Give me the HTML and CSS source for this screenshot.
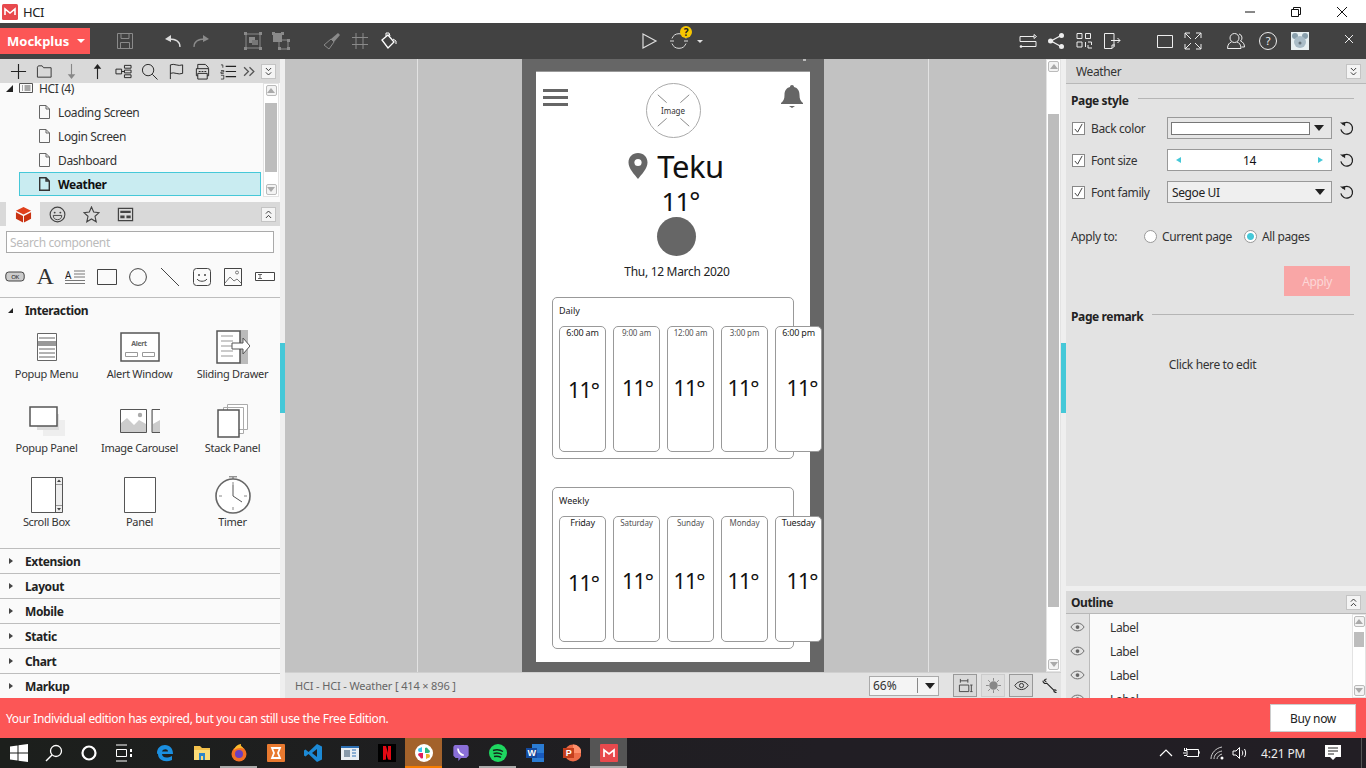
FILE: index.html
```html
<!DOCTYPE html>
<html lang="en">
<head>
<meta charset="utf-8">
<title>HCI - Mockplus</title>
<link rel="stylesheet" href="styles.css">
</head>
<body>
<div class="app">

  <!-- window title -->
  <div class="titlebar">
    <svg class="app-logo" viewBox="0 0 16 16"><rect width="16" height="16" rx="1.500" fill="#e8494d"/><path d="M3 11V5l5 4 5-4v6" fill="none" stroke="#fff" stroke-width="1.600"/></svg>
    <span class="app-name">HCI</span>
    <div class="win-btns">
      <svg viewBox="0 0 12 12"><path d="M1 6h10" stroke="#111" fill="none"/></svg>
      <svg viewBox="0 0 12 12"><path d="M1.500 3.500h7v7h-7zM3.500 3.500v-2h7v7h-2" stroke="#111" fill="none"/></svg>
      <svg viewBox="0 0 12 12"><path d="M1 1l10 10M11 1L1 11" stroke="#111" fill="none"/></svg>
    </div>
  </div>

  <!-- main toolbar -->
  <div class="toolbar">
    <div class="brand">Mockplus <i class="caret"></i></div>
    <div class="tgroup g-save dim">
      <svg viewBox="0 0 18 18"><path d="M1.500 1.500h15v15h-15zM5 1.500v5h8v-5M4.500 16.500v-6h9v6" fill="none" stroke="currentColor"/></svg>
    </div>
    <div class="tgroup g-undo">
      <svg viewBox="0 0 18 18"><path d="M16 15c0-5-4-8-11-8" fill="none" stroke="#ddd" stroke-width="1.300"/><path d="M1 7l6-4v7z" fill="#ddd"/></svg>
      <svg class="dim" viewBox="0 0 18 18"><path d="M2 15c0-5 4-8 11-8" fill="none" stroke="currentColor" stroke-width="1.300"/><path d="M17 7l-6-4v7z" fill="currentColor"/></svg>
    </div>
    <div class="tgroup g-arrange dim">
      <svg viewBox="0 0 18 18"><path d="M2 2h14v14H2z" fill="none" stroke="currentColor"/><path d="M5 5h6v6H5z" fill="currentColor"/><path d="M8 8h6v5H8z" fill="#777"/><path d="M0 0h3v3H0zM15 0h3v3h-3zM0 15h3v3H0zM15 15h3v3h-3z" fill="currentColor"/></svg>
      <svg viewBox="0 0 18 18"><path d="M1 1h9v9H1z" fill="currentColor"/><path d="M7 8h9v9H7z" fill="none" stroke="currentColor"/><path d="M0 0h3v3H0zM9 0h3v3H9zM15 7h3v3h-3zM6 15h3v3H6zM15 15h3v3h-3z" fill="currentColor"/></svg>
    </div>
    <div class="tgroup g-style">
      <svg class="dim" viewBox="0 0 18 18"><path d="M8 7l3 3-5 7-5-4z" fill="none" stroke="currentColor"/><path d="M8 7l7-6 2 2-6 7z" fill="currentColor"/></svg>
      <svg class="dim" viewBox="0 0 18 18"><path d="M5 1v16M12 1v16M1 5.500h16M1 12.500h16" fill="none" stroke="currentColor"/></svg>
      <svg viewBox="0 0 18 18"><path d="M3 8l6-5 6 7-6 6z" fill="none" stroke="#fff" stroke-width="1.300"/><path d="M7 4V1h3l1 3M14 7l3 2v3" fill="none" stroke="#fff"/></svg>
    </div>
    <div class="tgroup g-run">
      <svg viewBox="0 0 18 18"><path d="M1 2l13 7-13 7z" fill="none" stroke="#ddd" stroke-width="1.200"/></svg>
      <span class="sync">
        <svg viewBox="0 0 18 18"><path d="M2 6.500a7.500 7.500 0 0 1 14 0M16 11.500a7.500 7.500 0 0 1-14 0" fill="none" stroke="#ddd"/><path d="M0 9h4M14 9h4" stroke="#ddd"/></svg>
        <b class="qmark">?</b>
      </span>
      <i class="caret small"></i>
    </div>
    <div class="tgroup g-share">
      <svg viewBox="0 0 18 18"><path d="M1 9.500v-5h14v-2l2.500 2-2.500 2v-2M17 9.500v5H2.500M1 9.500h16" fill="none" stroke="#eee"/><circle cx="2" cy="14.500" r="1.300" fill="#eee"/></svg>
      <svg viewBox="0 0 18 18"><path d="M14 3.500L4 9l10 5.500" fill="none" stroke="#eee" stroke-width="1.300"/><circle cx="14.500" cy="3.500" r="2.500" fill="#eee"/><circle cx="3.500" cy="9" r="2.500" fill="#eee"/><circle cx="14.500" cy="14.500" r="2.500" fill="#eee"/></svg>
      <svg viewBox="0 0 18 18"><path d="M2 1.500h5v5H2zM10.500 1.500h5v5h-5zM2 10h5v5H2zM10.500 10v5M13 10h3.500v3M13 13v3h4" fill="none" stroke="#eee"/></svg>
      <svg viewBox="0 0 18 18"><path d="M11 15V1.500H1.500v15H9l2-2M9 16.500V13h3M8 8.500h9M14.500 6l2.500 2.500-2.500 2.500" fill="none" stroke="#eee"/></svg>
    </div>
    <div class="tgroup g-view">
      <svg viewBox="0 0 18 18"><path d="M1.500 3.500h15v12h-15z" fill="none" stroke="#eee"/></svg>
      <svg viewBox="0 0 18 18"><path d="M1 1l6 6M17 1l-6 6M1 17l6-6M17 17l-6-6M1 6V1h5M12 1h5v5M1 12v5h5M12 17h5v-5" fill="none" stroke="#eee"/></svg>
    </div>
    <div class="tgroup g-user">
      <svg viewBox="0 0 18 18"><circle cx="7.500" cy="6" r="4.500" fill="none" stroke="#eee"/><path d="M4.500 10c-2 .5-4 2.500-4 6.500H14c0-4-2-6-4-6.500M12 2a4 4 0 0 1 1.500 7c2.500 1 4 3 4 6h-3" fill="none" stroke="#eee"/></svg>
      <svg viewBox="0 0 18 18"><circle cx="9" cy="9" r="8.500" fill="none" stroke="#eee"/><text x="9" y="13" class="help">?</text></svg>
      <svg class="avatar" viewBox="0 0 18 18"><path d="M0 0h18v18H0z" fill="#e8f0f2"/><circle cx="4" cy="4" r="3" fill="#8aa0ad"/><circle cx="14" cy="4" r="3" fill="#8aa0ad"/><circle cx="9" cy="10" r="6" fill="#a9bcc7"/><circle cx="9" cy="11" r="1.500" fill="#66737b"/></svg>
    </div>
    <svg class="panel-x" viewBox="0 0 10 10"><path d="M1 1l8 8M9 1L1 9" stroke="#eee" fill="none"/></svg>
  </div>

  <div class="workspace">

    <!-- left side: pages + components -->
    <aside class="left">
      <div class="left-tools">
        <svg viewBox="0 0 18 18"><path d="M9 1v16M1 9h16" stroke="#222" fill="none" stroke-width="1.200"/></svg>
        <svg viewBox="0 0 18 18"><path d="M1.500 15V4.500l1-1.500h4l1.500 2h8v10z" stroke="#333" fill="none"/></svg>
        <svg viewBox="0 0 18 18"><path d="M9 1v14" stroke="#888" stroke-width="1.200"/><path d="M5 12h8l-4 5z" fill="#888"/></svg>
        <svg viewBox="0 0 18 18"><path d="M9 17V3" stroke="#222" stroke-width="1.200"/><path d="M5 6h8L9 1z" fill="#222"/></svg>
        <svg viewBox="0 0 18 18"><path d="M1 6.500h6v5H1zM10 2.500h7v3h-7zM10 7.500h7v3h-7zM10 12.500h7v3h-7zM7 9h3" stroke="#222" fill="none"/></svg>
        <svg viewBox="0 0 18 18"><circle cx="7.500" cy="7.500" r="6" stroke="#222" fill="none"/><path d="M12 12l5.500 5.500" stroke="#222"/></svg>
        <svg viewBox="0 0 18 18"><path d="M2.500 17V2c4-2 8 2 13 0v9c-5 2-9-2-13 0" stroke="#222" fill="none"/></svg>
        <svg viewBox="0 0 18 18"><path d="M4 6V1.500h8l3 3V6M4 13.500H2.500V6h13v7.500H14M4 11h10v6H4z" stroke="#222" fill="none"/><path d="M5 9h2M8 9h2M11 9h2" stroke="#222"/></svg>
        <svg viewBox="0 0 18 18"><path d="M6 3.500h11M6 9h11M6 14.500h11" stroke="#222" fill="none" stroke-width="1.300"/><path d="M1 2h2v3M1 8h3v1.500H1V11h3M1 13h3v4H1" stroke="#222" fill="none" stroke-width=".8"/></svg>
        <svg class="chev-more" viewBox="0 0 12 12"><path d="M1 2l4 4-4 4M6 2l4 4-4 4" stroke="#555" fill="none" stroke-width="1.200"/></svg>
        <span class="mini-btn"><svg viewBox="0 0 8 10"><path d="M1 1l3 3 3-3M1 6l3 3 3-3" stroke="#222" fill="none"/></svg></span>
      </div>

      <div class="tree">
        <div class="tree-list">
          <div class="tree-root"><i class="tri-down"></i>
            <svg class="list-ico" viewBox="0 0 14 10"><path d="M.5.500h13v9H.500zM3 3h1M3 5h1M3 7h1M5.500 3h6M5.500 5h6M5.500 7h6" stroke="#555" fill="none"/></svg>
            HCI (4)</div>
          <div class="tree-item"><svg class="page-ico" viewBox="0 0 11 14"><path d="M.5.500h6.500l3.500 3.500v9.500H.500zM7 .500V4h3.500" stroke="#666" fill="none"/></svg>Loading Screen</div>
          <div class="tree-item"><svg class="page-ico" viewBox="0 0 11 14"><path d="M.5.500h6.500l3.500 3.500v9.500H.500zM7 .500V4h3.500" stroke="#666" fill="none"/></svg>Login Screen</div>
          <div class="tree-item"><svg class="page-ico" viewBox="0 0 11 14"><path d="M.5.500h6.500l3.500 3.500v9.500H.500zM7 .500V4h3.500" stroke="#666" fill="none"/></svg>Dashboard</div>
          <div class="tree-item active"><svg class="page-ico" viewBox="0 0 11 14"><path d="M.7.700h6.300l3.300 3.300v9.300H.700zM7 .700V4h3.300" stroke="#333" stroke-width="1.400" fill="none"/></svg>Weather</div>
        </div>
        <div class="vscroll tree-scroll">
          <span class="sb-btn"><i class="tri-up"></i></span>
          <div class="sb-track"><div class="sb-thumb"></div></div>
          <span class="sb-btn"><i class="tri-dn"></i></span>
        </div>
      </div>

      <div class="tabs">
        <span class="tab on"><svg viewBox="0 0 18 18"><path d="M9 1l8 4-8 4-8-4z" fill="#e0401c"/><path d="M1 6.500l7.500 4v7L1 13.500zM17 6.500l-7.500 4v7l7.500-4z" fill="#c93312"/></svg></span>
        <span class="tab"><svg viewBox="0 0 18 18"><circle cx="9" cy="9" r="7.800" fill="none" stroke="#444" stroke-width="1.200"/><circle cx="6" cy="7" r="1" fill="#444"/><circle cx="12" cy="7" r="1" fill="#444"/><path d="M4.500 10h9c0 3-2 4.500-4.500 4.500S4.500 13 4.500 10z" fill="none" stroke="#444"/></svg></span>
        <span class="tab"><svg viewBox="0 0 18 18"><path d="M9 1l2.300 5.400 5.700.6-4.300 3.900 1.300 5.800-5-3-5 3 1.300-5.800L1 7l5.700-.6z" fill="none" stroke="#444" stroke-width="1.200"/></svg></span>
        <span class="tab"><svg viewBox="0 0 18 18"><path d="M1.500 2.500h15v13h-15z" fill="none" stroke="#444" stroke-width="1.300"/><path d="M3.500 5h11v2.500h-11zM3.500 10h4.500v3H3.500zM10 10h4.500v3H10z" fill="#444"/></svg></span>
        <span class="mini-btn"><svg viewBox="0 0 8 10"><path d="M1 4l3-3 3 3M1 9l3-3 3 3" stroke="#222" fill="none"/></svg></span>
      </div>

      <div class="search-box">Search component</div>

      <div class="basic-row">
        <svg viewBox="0 0 20 12"><rect x=".8" y="1" width="18.400" height="9" rx="3" fill="#ccc" stroke="#444"/><text x="10" y="8.300" class="ok">OK</text></svg>
        <span class="big-a">A</span>
        <svg viewBox="0 0 20 16"><text x="0" y="9.500" class="para-a">A</text><path d="M9 2h11M9 5h11M9 8h11M0 11.500h20M0 14.500h20" stroke="#777"/></svg>
        <svg viewBox="0 0 20 16"><path d="M.5.500h19v15H.5z" fill="none" stroke="#444"/></svg>
        <svg viewBox="0 0 18 18"><circle cx="9" cy="9" r="8.400" fill="none" stroke="#444"/></svg>
        <svg viewBox="0 0 18 18"><path d="M0 0l18 18" stroke="#444"/></svg>
        <svg viewBox="0 0 18 18"><rect x=".5" y=".5" width="17" height="17" rx="3" fill="none" stroke="#444"/><circle cx="6" cy="7" r="1" fill="#444"/><circle cx="12" cy="7" r="1" fill="#444"/><path d="M4 11c2 3 8 3 10 0" fill="none" stroke="#444"/></svg>
        <svg viewBox="0 0 18 18"><path d="M.5.500h17v17H.5z" fill="none" stroke="#444"/><circle cx="13" cy="4.500" r="1.500" fill="none" stroke="#777"/><path d="M1 15l5-6 4 4 3-2 4 4" fill="none" stroke="#777"/></svg>
        <svg viewBox="0 0 20 10"><path d="M.5.500h19v8H.5z" fill="#fff" stroke="#444"/><path d="M3 2.500h4M5 2.500v4M3 6.500h4" stroke="#444" stroke-width=".8"/></svg>
      </div>

      <div class="section-head open"><i class="tri-down"></i>Interaction</div>
      <div class="comp-grid">
        <div class="comp">
          <div class="comp-ico"><svg width="20" height="28" viewBox="0 0 20 28"><path d="M.5.500h19v27H.500z" fill="#fff" stroke="#666"/><path d="M2 5h16M2 16h16M2 20h16M2 24h16" stroke="#666"/><path d="M1 8h18v5H1z" fill="#999"/></svg></div>
          <span>Popup Menu</span>
        </div>
        <div class="comp">
          <div class="comp-ico"><svg width="40" height="30" viewBox="0 0 40 30"><path d="M1 1h38v28H1z" fill="#fff" stroke="#555" stroke-width="1.500"/><text x="19" y="14" class="alert">Alert</text><path d="M5.500 20.500h12v4h-12zM22.500 20.500h12v4h-12z" fill="none" stroke="#999"/></svg></div>
          <span>Alert Window</span>
        </div>
        <div class="comp">
          <div class="comp-ico"><svg width="34" height="34" viewBox="0 0 34 34"><path d="M24 0h8v34h-8z" fill="#bbb"/><path d="M1 1h23v32H1z" fill="#fff" stroke="#555" stroke-width="1.500"/><path d="M5 6h12M5 11h12M5 16h12M5 21h12M5 26h12" stroke="#bbb" stroke-width="1.500"/><path d="M16 13h11v-5l7 8-7 8v-5H16z" fill="#fff" stroke="#555"/></svg></div>
          <span>Sliding Drawer</span>
        </div>
        <div class="comp">
          <div class="comp-ico"><svg width="36" height="30" viewBox="0 0 36 30"><path d="M14 14h22v16H14z" fill="#eee"/><path d="M8 8h22v16H8z" fill="#ddd"/><path d="M1 1h27v19H1z" fill="#fff" stroke="#555" stroke-width="1.500"/></svg></div>
          <span>Popup Panel</span>
        </div>
        <div class="comp">
          <div class="comp-ico"><svg width="40" height="24" viewBox="0 0 40 24"><path d="M.5.500h26v23H.500z" fill="#ccc" stroke="#555"/><path d="M1 1h25v14l-7-4-5 5-7-7-6 5z" fill="#fff"/><circle cx="20" cy="6" r="2.200" fill="#aaa"/><path d="M40 .5h-8v23h8" fill="#ccc" stroke="#555"/><path d="M33 1h7v10l-7 4z" fill="#fff"/></svg></div>
          <span>Image Carousel</span>
        </div>
        <div class="comp">
          <div class="comp-ico"><svg width="32" height="34" viewBox="0 0 32 34"><path d="M10.500.500h20v25h-20zM6.500 3.500h20v26h-20z" fill="#fff" stroke="#aaa"/><path d="M1 6h21v27H1z" fill="#fff" stroke="#555" stroke-width="1.500"/></svg></div>
          <span>Stack Panel</span>
        </div>
        <div class="comp">
          <div class="comp-ico"><svg width="32" height="36" viewBox="0 0 32 36"><path d="M.5.500h31v35H.500z" fill="#fff" stroke="#555"/><path d="M24.500.500v35" stroke="#555"/><path d="M25 1h6v34h-6z" fill="#eee"/><path d="M25 7.500h6M25 28.500h6" stroke="#999"/><path d="M28 2.500l2 2.500h-4zM28 33.500l2-2.500h-4z" fill="#444"/></svg></div>
          <span>Scroll Box</span>
        </div>
        <div class="comp">
          <div class="comp-ico"><svg width="32" height="36" viewBox="0 0 32 36"><path d="M.5.500h31v35H.500z" fill="#fff" stroke="#555"/></svg></div>
          <span>Panel</span>
        </div>
        <div class="comp">
          <div class="comp-ico"><svg width="36" height="38" viewBox="0 0 36 38"><circle cx="18" cy="20" r="17" fill="#fff" stroke="#666" stroke-width="1.600"/><path d="M18 3V1M14 .8h8" stroke="#666"/><path d="M18 9v11l9 6" fill="none" stroke="#555"/><path d="M18 6v3M18 31v3M4 20h3M29 20h3" stroke="#888"/></svg></div>
          <span>Timer</span>
        </div>
      </div>

      <div class="accordion">
        <div class="section-head"><i class="tri-right"></i>Extension</div>
        <div class="section-head"><i class="tri-right"></i>Layout</div>
        <div class="section-head"><i class="tri-right"></i>Mobile</div>
        <div class="section-head"><i class="tri-right"></i>Static</div>
        <div class="section-head"><i class="tri-right"></i>Chart</div>
        <div class="section-head"><i class="tri-right"></i>Markup</div>
      </div>
      <span class="handle"></span>
    </aside>

    <!-- canvas -->
    <main class="center">
      <div class="canvas-row">
        <div class="canvas">
          <i class="guide guide-l"></i>
          <i class="guide guide-r"></i>
          <div class="device">
            <i class="device-mark"></i>
            <div class="screen">
              <div class="screen-top">
                <div class="burger"><i></i><i></i><i></i></div>
                <div class="img-ph">
                  <svg viewBox="0 0 54 54"><path d="M11 11l9 8M43 11l-9 8M11 43l9-8M43 43l-9-8" stroke="#888"/></svg>
                  <span>Image</span>
                </div>
                <svg class="bell" viewBox="0 0 22 24"><path d="M11 0c1.200 0 2 .8 2 2 4 1 5.500 4 5.500 8 0 4 1 6 3.500 8v1H0v-1c2.500-2 3.500-4 3.500-8 0-4 1.500-7 5.500-8 0-1.200.8-2 2-2z" fill="#666"/><path d="M8 21h6l-3 2z" fill="#666"/></svg>
              </div>
              <div class="city">
                <svg class="pin" viewBox="0 0 20 26"><path d="M10 0c5.500 0 9.500 4 9.500 9.500 0 6-6 12-9.500 16.500C6.500 21.500.5 15.500.5 9.500.5 4 4.500 0 10 0z" fill="#666"/><circle cx="10" cy="9.500" r="3.600" fill="#fff"/></svg>
                <span>Teku</span>
              </div>
              <div class="now-temp">11°</div>
              <div class="sun"></div>
              <div class="date">Thu, 12 March 2020</div>

              <section class="forecast daily">
                <div class="fc-title">Daily</div>
                <div class="fc-cards">
                  <div class="fc-card strong first"><span>6:00 am</span><b>11°</b></div>
                  <div class="fc-card"><span>9:00 am</span><b>11°</b></div>
                  <div class="fc-card nudge"><span>12:00 am</span><b>11°</b></div>
                  <div class="fc-card nudge"><span>3:00 pm</span><b>11°</b></div>
                  <div class="fc-card strong last"><span>6:00 pm</span><b>11°</b></div>
                </div>
              </section>

              <section class="forecast weekly">
                <div class="fc-title">Weekly</div>
                <div class="fc-cards">
                  <div class="fc-card strong first"><span>Friday</span><b>11°</b></div>
                  <div class="fc-card"><span>Saturday</span><b>11°</b></div>
                  <div class="fc-card nudge"><span>Sunday</span><b>11°</b></div>
                  <div class="fc-card nudge"><span>Monday</span><b>11°</b></div>
                  <div class="fc-card strong last"><span>Tuesday</span><b>11°</b></div>
                </div>
              </section>
            </div>
          </div>
        </div>
        <div class="vscroll canvas-scroll">
          <span class="sb-btn"><i class="tri-up"></i></span>
          <div class="sb-track"><div class="sb-thumb"></div></div>
          <span class="sb-btn"><i class="tri-dn"></i></span>
        </div>
      </div>
      <div class="statusbar">
        <span class="crumb">HCI - HCI - Weather [ 414 × 896 ]</span>
        <div class="zoom-box"><span>66%</span><i class="tri-dn big"></i></div>
        <span class="st-btn on"><svg viewBox="0 0 16 16"><path d="M2.500 1v4M10.500 1v4M2.500 3h8M1.500 7.500h10v7h-10zM13 7.500h2.500M14.200 7.500v7M13 14.500h2.500" stroke="#444" fill="none"/></svg></span>
        <span class="st-btn soft"><svg viewBox="0 0 16 16"><circle cx="8" cy="8" r="4.500" fill="#888"/><path d="M8 0v3M8 13v3M0 8h3M13 8h3M2.300 2.300l2 2M11.700 11.700l2 2M13.700 2.300l-2 2M4.300 11.700l-2 2" stroke="#888"/></svg></span>
        <span class="st-btn on"><svg viewBox="0 0 18 12"><path d="M1 6c4-6.500 12-6.500 16 0-4 6.500-12 6.500-16 0z" fill="none" stroke="#333" stroke-width="1.200"/><circle cx="9" cy="6" r="2.500" fill="none" stroke="#333" stroke-width="1.200"/></svg></span>
        <svg class="wrench" viewBox="0 0 16 16"><path d="M1 3c0 2 2 3.500 4 2.500l7.500 7.500M5 1C3.500 1 3 1.500 2.500 2.500L4.500 4M12.500 13c0 1.500 1 2.500 3 2.500M12.500 13c1-.5 2-.3 3 .5" stroke="#222" fill="none" stroke-width="1.200"/></svg>
      </div>
      <span class="handle handle-r"></span>
    </main>

    <!-- right side: properties -->
    <aside class="right">
      <div class="right-head"><span>Weather</span><span class="mini-btn"><svg viewBox="0 0 8 10"><path d="M1 1l3 3 3-3M1 6l3 3 3-3" stroke="#222" fill="none"/></svg></span></div>
      <div class="props">
        <div class="prop-title"><b>Page style</b><i></i></div>
        <div class="prop-row">
          <span class="check"><svg viewBox="0 0 12 12"><path d="M2 6.500l3 3.500 5-9" stroke="#333" fill="none"/></svg></span>
          <label>Back color</label>
          <div class="ctl color-ctl"><span class="swatch"></span><i class="tri-dn big"></i></div>
          <svg class="reset" viewBox="0 0 16 16"><path d="M3.500 3.500A6.300 6.300 0 1 1 2 9" stroke="#222" fill="none" stroke-width="1.300"/><path d="M1 1.500h5.500v4z" fill="#222"/></svg>
        </div>
        <div class="prop-row">
          <span class="check"><svg viewBox="0 0 12 12"><path d="M2 6.500l3 3.500 5-9" stroke="#333" fill="none"/></svg></span>
          <label>Font size</label>
          <div class="ctl size-ctl"><i class="tri-l"></i><span>14</span><i class="tri-r"></i></div>
          <svg class="reset" viewBox="0 0 16 16"><path d="M3.500 3.500A6.300 6.300 0 1 1 2 9" stroke="#222" fill="none" stroke-width="1.300"/><path d="M1 1.500h5.500v4z" fill="#222"/></svg>
        </div>
        <div class="prop-row">
          <span class="check"><svg viewBox="0 0 12 12"><path d="M2 6.500l3 3.500 5-9" stroke="#333" fill="none"/></svg></span>
          <label>Font family</label>
          <div class="ctl family-ctl"><span>Segoe UI</span><i class="tri-dn big"></i></div>
          <svg class="reset" viewBox="0 0 16 16"><path d="M3.500 3.500A6.300 6.300 0 1 1 2 9" stroke="#222" fill="none" stroke-width="1.300"/><path d="M1 1.500h5.500v4z" fill="#222"/></svg>
        </div>
        <div class="apply-to">
          <span class="apply-label">Apply to:</span>
          <i class="radio"></i><span class="r1">Current page</span>
          <i class="radio sel"></i><span>All pages</span>
        </div>
        <div class="apply-wrap"><button class="apply-btn">Apply</button></div>
        <div class="prop-title remark"><b>Page remark</b><i></i></div>
        <div class="remark-text">Click here to edit</div>
      </div>
      <div class="outline">
        <div class="outline-head"><b>Outline</b><span class="mini-btn"><svg viewBox="0 0 8 10"><path d="M1 4l3-3 3 3M1 9l3-3 3 3" stroke="#222" fill="none"/></svg></span></div>
        <div class="outline-body">
          <div class="eyes">
            <svg viewBox="0 0 16 10"><path d="M1 5c3-5.500 11-5.500 14 0-3 5.500-11 5.500-14 0z" fill="none" stroke="#666"/><circle cx="8" cy="5" r="2" fill="#666"/></svg>
            <svg viewBox="0 0 16 10"><path d="M1 5c3-5.500 11-5.500 14 0-3 5.500-11 5.500-14 0z" fill="none" stroke="#666"/><circle cx="8" cy="5" r="2" fill="#666"/></svg>
            <svg viewBox="0 0 16 10"><path d="M1 5c3-5.500 11-5.500 14 0-3 5.500-11 5.500-14 0z" fill="none" stroke="#666"/><circle cx="8" cy="5" r="2" fill="#666"/></svg>
            <svg viewBox="0 0 16 10"><path d="M1 5c3-5.500 11-5.500 14 0-3 5.500-11 5.500-14 0z" fill="none" stroke="#666"/><circle cx="8" cy="5" r="2" fill="#666"/></svg>
          </div>
          <div class="out-list">
            <div>Label</div><div>Label</div><div>Label</div><div>Label</div>
          </div>
          <div class="vscroll out-scroll">
            <span class="sb-btn"><i class="tri-up"></i></span>
            <div class="sb-track"><div class="sb-thumb"></div></div>
            <span class="sb-btn"><i class="tri-dn"></i></span>
          </div>
        </div>
      </div>
    </aside>
  </div>

  <!-- upgrade notice -->
  <div class="notice">
    <span>Your Individual edition has expired, but you can still use the Free Edition.</span>
    <button class="buy">Buy now</button>
  </div>

  <!-- windows taskbar -->
  <div class="taskbar">
    <span class="tb-app sys"><svg viewBox="0 0 18 18"><path d="M0 2.500L7.500 1.400v7.100H0zM8.500 1.300L18 0v8.500H8.500zM0 9.500h7.500v7.100L0 15.500zM8.500 9.500H18V18l-9.500-1.300z" fill="#fff"/></svg></span>
    <span class="tb-app sys"><svg viewBox="0 0 18 18"><circle cx="11" cy="7" r="5.500" fill="none" stroke="#fff" stroke-width="1.300"/><path d="M7 11l-6 6" stroke="#fff" stroke-width="1.500"/></svg></span>
    <span class="tb-app sys"><svg viewBox="0 0 18 18"><circle cx="9" cy="9" r="6.500" fill="none" stroke="#fff" stroke-width="2.200"/></svg></span>
    <span class="tb-app sys"><svg viewBox="0 0 18 18"><path d="M1 1h11M1 17h11M1.500 5.500h10v7h-10z" fill="none" stroke="#fff"/><path d="M15 5h2v3h-2zM15 10h2v3h-2z" fill="#fff"/></svg></span>
    <span class="tb-app"><svg viewBox="0 0 18 18"><path d="M1 9C1 4 4.500 1 9 1c5 0 8 3.500 8 9H6c0 3 4 5 10 2v4c-7 3-14 0-14-6 0 0-1 0-1-1zM6 7.500h6C12 4.500 7 4.500 6 7.500z" fill="#1b8fe0"/></svg></span>
    <span class="tb-app"><svg viewBox="0 0 18 18"><path d="M1 2h6l2 2h8v12H1z" fill="#f3c14b"/><path d="M1 6h16v10H1z" fill="#fbdc78"/><path d="M6 9h6v7H6z" fill="#2f86c9"/><path d="M8 12h2v4H8z" fill="#fbdc78"/></svg></span>
    <span class="tb-app open"><svg viewBox="0 0 18 18"><circle cx="9" cy="10" r="7.500" fill="#f36f24"/><circle cx="9" cy="10" r="4" fill="#6a3fc0"/><path d="M4 6c1-4 5-6 7-6-1 2 2 3 3 5-3-2-7-1-10 1z" fill="#fcb92c"/></svg></span>
    <span class="tb-app"><svg viewBox="0 0 18 18"><rect width="18" height="18" rx="1" fill="#e8792f"/><path d="M5 4h8l-2 5 2 5H5l2-5z" fill="none" stroke="#fff" stroke-width="1.800"/></svg></span>
    <span class="tb-app"><svg viewBox="0 0 18 18"><path d="M13 0l5 2.500v13L13 18 4.500 10 1.500 12.500 0 11.500V6.500l1.500-1 3 2.500zM13 5L8 9l5 4z" fill="#1c8ad6"/></svg></span>
    <span class="tb-app"><svg viewBox="0 0 18 18"><path d="M0 2h18v14H0z" fill="#e9eef3"/><path d="M0 2h18v2H0z" fill="#2d6fb3"/><path d="M3 6h6v7H3z" fill="#8799aa"/><path d="M11 6h4M11 9h4M11 12h4" stroke="#2d6fb3"/></svg></span>
    <span class="tb-app"><svg viewBox="0 0 18 18"><path d="M0 0h18v18H0z" fill="#000"/><path d="M5 2h3l2 7V2h3v14l-3-.5L8 9v6.500L5 16z" fill="#e50914"/></svg></span>
    <span class="tb-app active"><svg viewBox="0 0 18 18"><circle cx="9" cy="9" r="9" fill="#fff"/><path d="M7 3v5H5a2 2 0 0 1 0-4z" fill="#36c5f0"/><path d="M15 7a2 2 0 0 1-2 2h-3V4a2 2 0 0 1 3 1z" fill="#2eb67d"/><path d="M11 15v-5h2a2 2 0 0 1 0 4z" fill="#ecb22e"/><path d="M3 11a2 2 0 0 1 2-2h3v5a2 2 0 0 1-3-1z" fill="#e01e5a"/></svg></span>
    <span class="tb-app"><svg viewBox="0 0 18 20"><path d="M2 1h14l1.500 2v10L15 15.500H9L6 19v-3.500H3L.5 13V3z" fill="#8a6fd8"/><path d="M5 5c1-1 2 1 2 2 .5 2 2 3.500 4 4 1 0 2 1 1 2-3 1-8-4-7-8z" fill="#fff"/></svg></span>
    <span class="tb-app open"><svg viewBox="0 0 18 18"><circle cx="9" cy="9" r="9" fill="#1ed760"/><path d="M4 6.500c3-1 7-.8 10 1M4.500 9.500c3-.8 6-.5 8.500 1M5 12.500c2.500-.6 5-.3 7 .8" fill="none" stroke="#14261a" stroke-width="1.400"/></svg></span>
    <span class="tb-app"><svg viewBox="0 0 18 18"><path d="M6 0h12v18H6z" fill="#2b7cd3"/><path d="M6 9h12v5H6z" fill="#185abd"/><path d="M0 4h11v10H0z" fill="#144a9e"/><text x="5.500" y="12" class="word">W</text></svg></span>
    <span class="tb-app"><svg viewBox="0 0 18 18"><circle cx="10" cy="9" r="8.500" fill="#ed6c47"/><path d="M10 .5A8.500 8.500 0 0 1 18.500 9H10z" fill="#ff8f6b"/><path d="M0 4h11v10H0z" fill="#c43e1c"/><text x="5.500" y="12" class="word">P</text></svg></span>
    <span class="tb-app open cur"><svg viewBox="0 0 18 18"><rect width="18" height="18" rx="1" fill="#e8494d"/><path d="M4 13V6l5 4 5-4v7" fill="none" stroke="#fff" stroke-width="1.700"/></svg></span>

    <div class="tray">
      <svg class="t-up" viewBox="0 0 14 8"><path d="M1 7l6-6 6 6" fill="none" stroke="#fff" stroke-width="1.200"/></svg>
      <svg class="t-bat" viewBox="0 0 17 12"><path d="M4 2.500h11.500v7H4M15.500 5h1.500v2M0 6h3M1 3.500h3v5H1M1.500 1v2.500M3.500 1v2.500" fill="none" stroke="#fff"/></svg>
      <svg class="t-wifi" viewBox="0 0 15 14"><path d="M1 13C1 7 6 2 12 1M4 13c0-4 3-7 8-8M7 13c0-2 2-4 5-5" fill="none" stroke="#ccc"/><circle cx="12" cy="12" r="1.500" fill="#fff"/></svg>
      <svg class="t-vol" viewBox="0 0 16 14"><path d="M1 5h3l3.500-3.500v11L4 9H1zM10 4.500c1 1.500 1 3.500 0 5M12.500 3c1.500 2.500 1.500 5.500 0 8" fill="none" stroke="#fff"/></svg>
      <span class="clock">4:21 PM</span>
      <svg class="t-note" viewBox="0 0 16 16"><path d="M0 0h16v12h-5l-3 3-3-3H0z" fill="#fff"/><path d="M3 3h10M3 6h10M3 9h6" stroke="#222"/></svg>
      <i class="show-desk"></i>
    </div>
  </div>
</div>
</body>
</html>
```

FILE: styles.css
```css
* { box-sizing: border-box; }
html, body { margin: 0; padding: 0; height: 100%; }
body {
  font-family: "Noto Sans", "Open Sans", sans-serif;
  font-size: 12px;
  letter-spacing: -0.38px;
  color: #222;
  overflow: hidden;
}
svg { display: block; flex: none; }
i { display: block; flex: none; }
button { letter-spacing: inherit; }

.app { width: 1366px; height: 768px; display: flex; flex-direction: column; overflow: hidden; }

/* title bar */
.titlebar { height: 23px; background: #fff; display: flex; align-items: center; padding-left: 2px; }
.app-logo { width: 16px; height: 16px; }
.app-name { margin-left: 5px; font-size: 13px; color: #222; }
.win-btns { margin-left: auto; display: flex; }
.win-btns svg { width: 12px; height: 12px; margin-right: 34px; }
.win-btns svg:last-child { margin-right: 18px; }

/* toolbar */
.toolbar { height: 36px; background: #424242; display: flex; align-items: center; color: #8a8a8a; }
.brand {
  width: 90px; height: 26px; background: #fc5656; color: #fff;
  font-weight: 700; font-size: 13px; line-height: 26px; padding-left: 7px;
  display: flex; align-items: center; gap: 8px; letter-spacing: 0;
}
.caret { width: 0; height: 0; border: 4px solid transparent; border-top: 4px solid #fff; border-bottom: 0; }
.caret.small { border-width: 3px 3px 0; margin-left: -1px; border-top-color: #ddd; }
.tgroup { display: flex; align-items: center; gap: 10px; }
.tgroup svg { width: 18px; height: 18px; }
.dim { color: #8a8a8a; }
.g-save { margin-left: 26px; }
.g-undo { margin-left: 30px; }
.g-arrange { margin-left: 34px; }
.g-style { margin-left: 33px; }
.g-run { margin-left: 245px; }
.g-share { margin-left: 316px; }
.g-view { margin-left: 35px; }
.g-user { margin-left: 25px; gap: 14px; }
.sync { position: relative; display: block; }
.qmark {
  position: absolute; left: 10px; top: -6px; width: 12px; height: 12px; border-radius: 50%;
  background: #f7c600; color: #222; font-size: 10px; line-height: 12px; text-align: center;
}
.help { font: 11px "Noto Sans", sans-serif; fill: #eee; text-anchor: middle; }
.panel-x { width: 10px; height: 10px; margin-left: 35px; margin-top: -4px; }

/* three columns */
.workspace { height: 639px; display: flex; }

.left { width: 285px; background: #fafafa; border-right: 5px solid #efefef; position: relative; flex: none; }
.left-tools { height: 24px; background: #d9d9d9; display: flex; align-items: center; gap: 9.300px; padding-left: 10px; }
.left-tools svg { width: 17px; height: 17px; }
.left-tools .chev-more { width: 13px; height: 13px; margin-left: -4px; }
.mini-btn {
  width: 15px; height: 15px; background: #f4f4f4; border: 1px solid #c4c4c4;
  display: flex; align-items: center; justify-content: center;
}
.mini-btn svg { width: 7px !important; height: 9px !important; }
.left-tools .mini-btn { margin-left: -4px; }

.tree { height: 114px; display: flex; overflow: hidden; }
.tree-list { width: 262px; }
.tree-root { height: 10px; display: flex; align-items: center; padding-left: 6px; margin-bottom: 7px; color: #333; gap: 6px; }
.tree-root .list-ico { width: 14px; height: 10px; }
.tree-item { height: 24px; display: flex; align-items: center; padding-left: 39px; gap: 8px; color: #333; }
.page-ico { width: 11px; height: 14px; }
.tree-item.active {
  margin-left: 19px; padding-left: 19px; width: 242px; background: #c9ecf1; border: 1px solid #45c8d8;
  font-weight: 700; color: #111;
}
.tri-down { width: 0; height: 0; border-left: 7px solid transparent; border-bottom: 7px solid #222; }
.tri-right { width: 0; height: 0; border-top: 3px solid transparent; border-bottom: 3px solid transparent; border-left: 4px solid #444; }
.tri-up { width: 0; height: 0; border: 4px solid transparent; border-bottom: 5px solid #aaa; border-top: 0; }
.tri-dn { width: 0; height: 0; border: 4px solid transparent; border-top: 5px solid #aaa; border-bottom: 0; }
.tri-dn.big { border-width: 6px 5px 0; border-top-color: #222; }
.tri-l { width: 0; height: 0; border-top: 3px solid transparent; border-bottom: 3px solid transparent; border-right: 5px solid #45c8d8; }
.tri-r { width: 0; height: 0; border-top: 3px solid transparent; border-bottom: 3px solid transparent; border-left: 5px solid #45c8d8; }

.vscroll { display: flex; flex-direction: column; background: #fff; border: 1px solid #e3e3e3; align-items: center; }
.sb-btn {
  width: 11px; height: 11px; background: #f3f3f3; border: 1px solid #bbb; border-radius: 2px;
  display: flex; align-items: center; justify-content: center; flex: none; margin: 1px 0;
}
.sb-track { flex: 1; width: 100%; padding: 0 1px; }
.sb-thumb { background: #bdbdbd; }
.tree-scroll { width: 16px; margin-left: 1px; }
.tree-scroll .sb-thumb { height: 69px; margin-top: 6px; }

.tabs { margin-top: 5px; height: 24px; background: #d9d9d9; display: flex; align-items: center; padding-left: 6px; }
.tab { width: 34px; height: 24px; display: flex; align-items: center; justify-content: center; }
.tab svg { width: 17px; height: 17px; }
.tab.on { background: #fafafa; }
.tabs .mini-btn { margin-left: auto; margin-right: 4px; }

.search-box {
  margin: 5px 6px 0; width: 268px; height: 22px; border: 1px solid #aaa; background: #fff;
  color: #bbb; line-height: 21px; padding-left: 3px;
}
.basic-row { height: 45px; border-bottom: 1px solid #bdbdbd; display: flex; align-items: center; gap: 11.600px; padding: 3px 6px 0 5px; }
.basic-row svg { width: 20px; height: 18px; }
.big-a { font: 24px "Liberation Serif", serif; color: #333; width: 20px; text-align: center; }
.ok { font: 6px "Noto Sans", sans-serif; fill: #222; text-anchor: middle; }
.para-a { font: 10px "Noto Sans", sans-serif; fill: #222; }

.section-head {
  height: 25px; display: flex; align-items: center; font-weight: 700; color: #222;
  padding-left: 9px; gap: 12px;
}
.section-head.open { height: 24px; padding-left: 8px; gap: 9px; }
.section-head.open .tri-down { border-left-width: 5px; border-bottom-width: 5px; margin-right: 3px; }
.comp-grid { display: grid; grid-template-columns: repeat(3, 93px); grid-auto-rows: 74px; height: 226px; padding-top: 5px; }
.comp { display: flex; flex-direction: column; align-items: center; color: #333; height: 74px; }
.comp-ico { height: 39px; display: flex; align-items: center; justify-content: center; }
.comp span { line-height: 16px; font-size: 11px; letter-spacing: -0.3px; }
.alert { font: 700 7px "Noto Sans", sans-serif; fill: #666; text-anchor: middle; }
.accordion .section-head { border-top: 1px solid #bdbdbd; }
.accordion { width: 280px; }
.handle { position: absolute; left: 280px; top: 284px; width: 5px; height: 70px; background: #45c8d8; }

/* centre */
.center { width: 781px; flex: none; position: relative; background: #efefef; }
.canvas-row { height: 613px; display: flex; }
.canvas { width: 761px; background: #c2c2c2; position: relative; overflow: hidden; }
.guide { position: absolute; top: 0; bottom: 0; width: 1px; background: #e2e2e2; }
.guide-l { left: 132px; }
.guide-r { left: 643px; }
.device {
  position: relative; margin-left: 237px; width: 302px; height: 613px; background: #666;
  padding: 12px 14px 10px;
}
.device-mark { position: absolute; left: 281px; top: 0; width: 3px; height: 2px; background: #bbb; }
.screen { width: 274px; height: 591px; background: #fff; border-top: 1px solid #999; }
.screen-top { height: 68px; padding-top: 11px; display: flex; justify-content: space-between; position: relative; }
.burger { width: 25px; margin: 6px 0 0 7px; display: flex; flex-direction: column; gap: 4px; }
.burger i { height: 3px; background: #666; }
.img-ph {
  width: 55px; height: 55px; border-radius: 50%; border: 1px solid #aaa; position: relative; margin-right: 3px;
  display: flex; align-items: center; justify-content: center; font-size: 8px; letter-spacing: 0; color: #333;
}
.img-ph svg { position: absolute; left: 0; top: 0; width: 53px; height: 53px; }
.img-ph span { position: relative; }
.bell { width: 22px; height: 24px; margin: 2px 7px 0 0; }
.city { display: flex; justify-content: center; align-items: center; gap: 9px; height: 38px; color: #111; font-size: 31px; line-height: 38px; margin-top: 7px; letter-spacing: -0.5px; padding-left: 6px; }
.pin { width: 20px; height: 26px; }
.now-temp { text-align: center; font-size: 26px; line-height: 32px; height: 32px; color: #111; padding-left: 15px; letter-spacing: -1px; }
.sun { width: 39px; height: 39px; border-radius: 50%; background: #666; margin: 0 0 0 121px; }
.date { text-align: center; font-size: 12px; line-height: 16px; margin-top: 8px; color: #222; padding-left: 8px; letter-spacing: -0.3px; }

.forecast { margin-left: 16px; width: 242px; height: 162px; border: 1px solid #999; border-radius: 5px; padding: 0 0 0 6px; }
.daily { margin-top: 17px; }
.weekly { margin-top: 28px; }
.fc-title { font-size: 9px; height: 28px; line-height: 26px; color: #222; letter-spacing: 0; }
.fc-cards { display: flex; gap: 7px; }
.fc-card {
  width: 47px; height: 126px; flex: none; border: 1px solid #999; border-radius: 5px; background: #fff;
  display: flex; flex-direction: column; align-items: center; font-size: 8px; color: #555; letter-spacing: -0.1px;
}
.fc-card span { line-height: 12px; height: 42px; white-space: nowrap; }
.weekly .fc-card span { height: 45px; }
.fc-card.strong { font-size: 9px; color: #222; letter-spacing: -0.2px; }
.fc-card b { font-weight: 400; font-size: 21.500px; line-height: 38px; color: #111; padding-left: 2px; letter-spacing: -1px; }
.fc-card.first b { margin-top: 2px; }
.fc-card.nudge b { padding-left: 0; margin-left: -3px; }
.fc-card.last b { padding-left: 7px; }

.canvas-scroll { width: 15px; }
.canvas-scroll .sb-thumb { height: 493px; margin-top: 41px; }

.statusbar { height: 26px; width: 776px; background: #e3e3e3; display: flex; align-items: center; border-top: 1px solid #d0d0d0; }
.crumb { margin-left: 10px; color: #666; font-size: 11px; width: 574px; letter-spacing: -0.15px; }
.zoom-box {
  width: 70px; height: 20px; border: 1px solid #aaa; background: #f4f4f4; display: flex; align-items: center;
  padding-left: 3px; color: #333; letter-spacing: 0;
}
.zoom-box span { width: 45px; border-right: 1px solid #888; line-height: 15px; }
.zoom-box i { margin-left: 7px; }
.st-btn { width: 24px; height: 23px; margin-left: 4px; display: flex; align-items: center; justify-content: center; border: 1px solid #ccc; background: #dedede; }
.zoom-box + .st-btn { margin-left: 14px; }
.st-btn.on { border-color: #999; background: #d9d9d9; }
.st-btn svg { width: 15px; height: 15px; }
.wrench { width: 15px; height: 15px; margin-left: 9px; }
.handle-r { left: 776px; }

/* right */
.right { width: 300px; flex: none; background: #e3e3e3; display: flex; flex-direction: column; }
.right-head { height: 25px; background: #d9d9d9; border-bottom: 1px solid #b8b8b8; display: flex; align-items: center; justify-content: space-between; padding: 0 5px 0 10px; color: #333; }
.props { flex: 1; padding: 0 12px 0 5px; height: 502px; }
.prop-title { display: flex; align-items: center; height: 28px; padding-top: 4px; gap: 9px; color: #222; }
.prop-title i { flex: 1; height: 1px; background: #b5b5b5; margin-top: -4px; }
.prop-row { height: 32px; display: flex; align-items: center; }
.check { width: 13px; height: 13px; border: 1px solid #888; background: #fff; margin-left: 1px; }
.check svg { width: 11px; height: 11px; }
.prop-row label { width: 76px; margin-left: 6px; color: #333; }
.ctl { width: 165px; height: 22px; border: 1px solid #999; display: flex; align-items: center; }
.color-ctl { background: #e6e6e6; padding: 0 7px 0 3px; justify-content: space-between; }
.swatch { width: 139px; height: 13px; background: #fff; border: 1px solid #777; }
.size-ctl { background: #fff; padding: 0 8px; justify-content: space-between; }
.size-ctl span { color: #111; }
.family-ctl { background: #efefef; padding: 0 6px 0 4px; justify-content: space-between; }
.reset { width: 15px; height: 15px; margin-left: 7px; }
.apply-to { display: flex; align-items: center; height: 20px; margin-top: 18px; color: #333; }
.apply-label { width: 73px; }
.radio { width: 13px; height: 13px; border-radius: 50%; background: #fff; border: 1px solid #999; margin-right: 5px; }
.radio.sel { background: radial-gradient(circle, #45c8d8 0 3px, #fff 4px); }
.r1 { width: 82px; }
.apply-wrap { display: flex; justify-content: flex-end; margin-top: 20px; padding-right: 4px; }
.apply-btn { width: 66px; height: 30px; border: 0; background: #f9a6a6; color: #fcd7d7; font: 12px "Noto Sans", sans-serif; }
.prop-title.remark { margin-top: 4px; }
.remark-text { text-align: center; margin-top: 28px; color: #333; }
.outline { height: 112px; margin-top: auto; border-top: 5px solid #efefef; }
.outline-head { height: 23px; background: #d9d9d9; border-bottom: 1px solid #b8b8b8; display: flex; align-items: center; justify-content: space-between; padding: 1px 5px 0; }
.outline-body { display: flex; height: 84px; overflow: hidden; }
.eyes { width: 23px; display: flex; flex-direction: column; padding: 8px 0 0 4px; gap: 14px; }
.eyes svg { width: 15px; height: 10px; }
.out-list { flex: 1; background: #fafafa; border-left: 1px solid #bbb; padding: 1px 0 0 20px; }
.out-list div { height: 24px; line-height: 25px; color: #333; }
.out-scroll { width: 14px; height: 84px; }
.out-scroll .sb-thumb { height: 15px; margin-top: 4px; }

/* notice */
.notice { height: 40px; background: #fc5656; color: #fff; display: flex; align-items: center; justify-content: space-between; padding: 0 10px 0 6px; letter-spacing: -0.34px; }
.buy { width: 86px; height: 28px; background: #fff; border: 1px solid #ccc; color: #222; font: 12px "Noto Sans", sans-serif; }

/* taskbar */
.taskbar { height: 30px; background: linear-gradient(90deg, #1c1f1c, #211e24 60%, #221e24); display: flex; align-items: stretch; position: relative; }
.tb-app { width: 37px; display: flex; align-items: center; justify-content: center; position: relative; }
.tb-app svg { width: 18px; height: 18px; }
.tb-app.sys { width: 35px; }
.tb-app.sys:first-child { margin-left: 1px; }
.tb-app.sys + .tb-app:not(.sys) { margin-left: 5px; }
.tb-app.active { background: #a3622b; box-shadow: inset 0 -2px 0 #f57c00; }
.tb-app.open { box-shadow: inset 0 -2px 0 #aaa; }
.tb-app.cur { background: #555; }
.word { font: 700 9px "Liberation Sans", sans-serif; fill: #fff; text-anchor: middle; }
.tray { margin-left: auto; display: flex; align-items: center; color: #fff; padding-right: 4px; }
.t-up { width: 14px; height: 8px; margin-right: 10px; }
.t-bat { width: 17px; height: 12px; margin-right: 10px; }
.t-wifi { width: 15px; height: 14px; margin-right: 7px; }
.t-vol { width: 16px; height: 14px; margin-right: 13px; }
.clock { font-size: 12px; color: #eee; width: 42px; white-space: nowrap; margin-right: 22px; letter-spacing: -0.1px; }
.t-note { width: 16px; height: 16px; margin-right: 20px; }
.show-desk { width: 1px; height: 30px; background: #555; }
```
